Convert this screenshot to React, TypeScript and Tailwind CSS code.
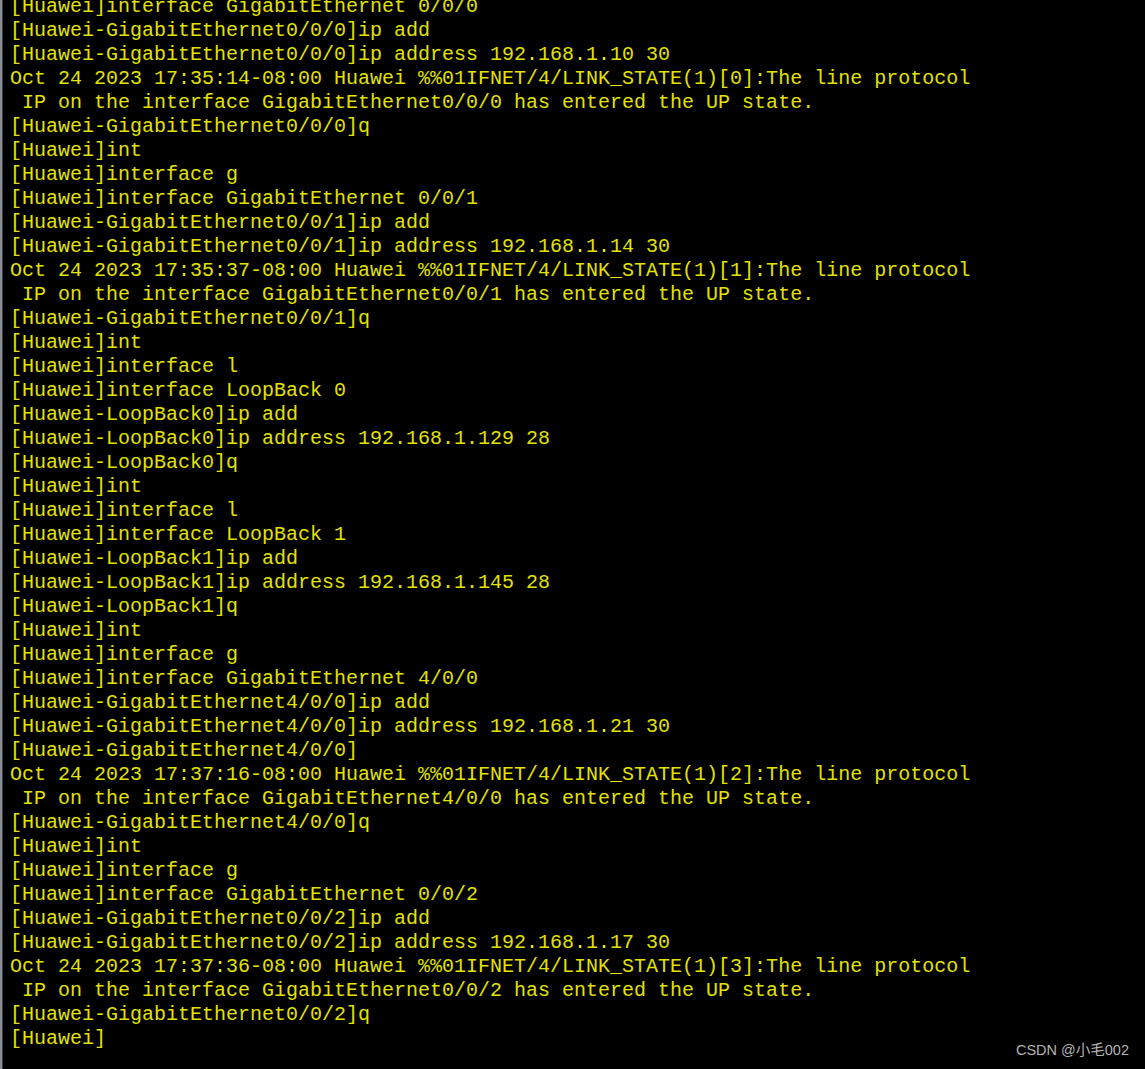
import React from 'react';

const lines = [
  '[Huawei]interface GigabitEthernet 0/0/0',
  '[Huawei-GigabitEthernet0/0/0]ip add',
  '[Huawei-GigabitEthernet0/0/0]ip address 192.168.1.10 30',
  'Oct 24 2023 17:35:14-08:00 Huawei %%01IFNET/4/LINK_STATE(1)[0]:The line protocol',
  ' IP on the interface GigabitEthernet0/0/0 has entered the UP state.',
  '[Huawei-GigabitEthernet0/0/0]q',
  '[Huawei]int',
  '[Huawei]interface g',
  '[Huawei]interface GigabitEthernet 0/0/1',
  '[Huawei-GigabitEthernet0/0/1]ip add',
  '[Huawei-GigabitEthernet0/0/1]ip address 192.168.1.14 30',
  'Oct 24 2023 17:35:37-08:00 Huawei %%01IFNET/4/LINK_STATE(1)[1]:The line protocol',
  ' IP on the interface GigabitEthernet0/0/1 has entered the UP state.',
  '[Huawei-GigabitEthernet0/0/1]q',
  '[Huawei]int',
  '[Huawei]interface l',
  '[Huawei]interface LoopBack 0',
  '[Huawei-LoopBack0]ip add',
  '[Huawei-LoopBack0]ip address 192.168.1.129 28',
  '[Huawei-LoopBack0]q',
  '[Huawei]int',
  '[Huawei]interface l',
  '[Huawei]interface LoopBack 1',
  '[Huawei-LoopBack1]ip add',
  '[Huawei-LoopBack1]ip address 192.168.1.145 28',
  '[Huawei-LoopBack1]q',
  '[Huawei]int',
  '[Huawei]interface g',
  '[Huawei]interface GigabitEthernet 4/0/0',
  '[Huawei-GigabitEthernet4/0/0]ip add',
  '[Huawei-GigabitEthernet4/0/0]ip address 192.168.1.21 30',
  '[Huawei-GigabitEthernet4/0/0]',
  'Oct 24 2023 17:37:16-08:00 Huawei %%01IFNET/4/LINK_STATE(1)[2]:The line protocol',
  ' IP on the interface GigabitEthernet4/0/0 has entered the UP state.',
  '[Huawei-GigabitEthernet4/0/0]q',
  '[Huawei]int',
  '[Huawei]interface g',
  '[Huawei]interface GigabitEthernet 0/0/2',
  '[Huawei-GigabitEthernet0/0/2]ip add',
  '[Huawei-GigabitEthernet0/0/2]ip address 192.168.1.17 30',
  'Oct 24 2023 17:37:36-08:00 Huawei %%01IFNET/4/LINK_STATE(1)[3]:The line protocol',
  ' IP on the interface GigabitEthernet0/0/2 has entered the UP state.',
  '[Huawei-GigabitEthernet0/0/2]q',
  '[Huawei]',
];

const App: React.FC = () => {
  return (
    <div className="relative w-[1145px] h-[1069px] overflow-hidden bg-black flex">
      {/* window edge */}
      <div className="w-[2px] bg-[#8a8f96]" />
      <div className="w-[1px] bg-[#3a3d42]" />
      <div className="flex-1 pl-[7px] -mt-[5px]">
        {lines.map((line, i) => (
          <div
            key={i}
            className="h-[24px] leading-[24px] text-[20px] text-[#e2e200] whitespace-pre font-['Liberation_Mono','Courier_New',monospace]"
          >
            {line}
          </div>
        ))}
      </div>
      <div className="absolute right-[16px] bottom-[7px] text-[14.5px] text-[#b4b4b4] font-['Liberation_Sans','Noto_Sans_CJK_SC',sans-serif]">
        CSDN @小毛002
      </div>
    </div>
  );
};

export default App;
